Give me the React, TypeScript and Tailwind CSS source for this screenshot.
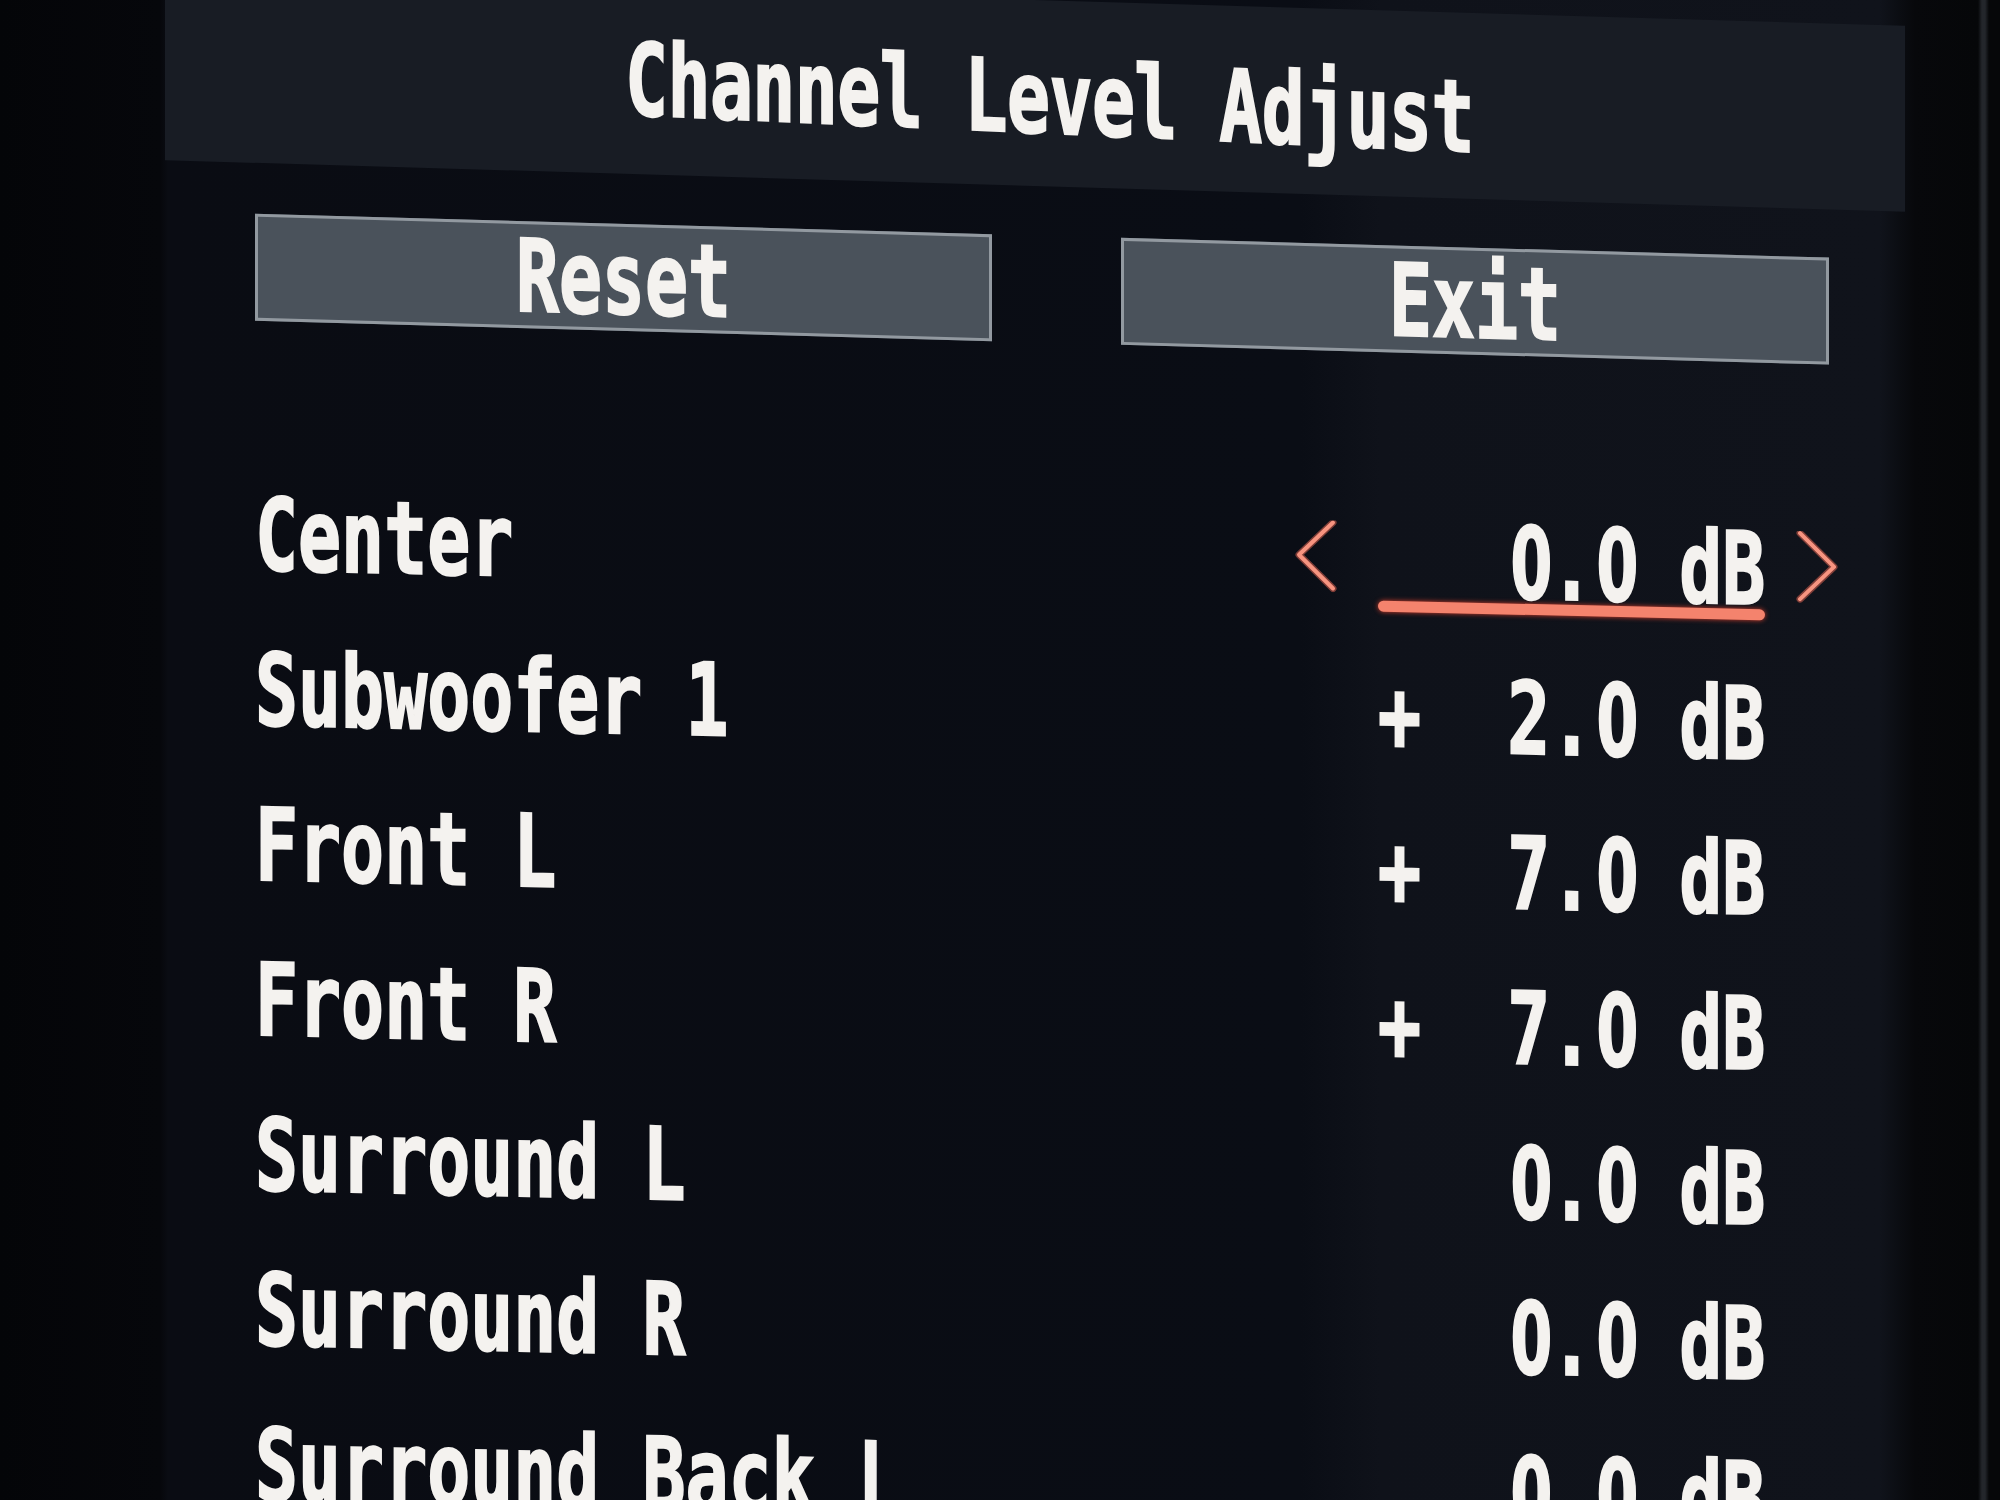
import React from "react";

const mono =
  "font-['DejaVu_Sans_Mono','Liberation_Mono',monospace] font-bold text-[71.5px] leading-[71px] scale-y-[1.4] text-[#f4f2ef] [-webkit-text-stroke:1.5px_#f4f2ef]";

const rows = [
  { name: "Center", value: "   0.0 dB", active: true },
  { name: "Subwoofer 1", value: "+  2.0 dB" },
  { name: "Front L", value: "+  7.0 dB" },
  { name: "Front R", value: "+  7.0 dB" },
  { name: "Surround L", value: "   0.0 dB" },
  { name: "Surround R", value: "   0.0 dB" },
  { name: "Surround Back L", value: "   0.0 dB" },
];

// the OSD font draws a plain zero, the mono one has a dot in it
function Value({ text }: { text: string }) {
  return (
    <>
      {text.split("").map((c, i) =>
        c === "0" ? (
          <span key={i} className="inline-block w-[43px] text-center font-['DejaVu_Sans',sans-serif] scale-x-[0.84]">
            0
          </span>
        ) : (
          <React.Fragment key={i}>{c}</React.Fragment>
        )
      )}
    </>
  );
}

function Chevron({ dir, show }: { dir: "left" | "right"; show?: boolean }) {
  const pts = dir === "left" ? "38,2 4,35 38,68" : "4,2 38,35 4,68";
  return (
    <svg viewBox="0 0 42 72" className={`w-[42px] h-[72px] -mt-[4px] shrink-0 ${show ? "" : "invisible"}`}>
      <polyline points={pts} fill="none" stroke="#f06a55" strokeWidth={7} strokeLinecap="round" strokeLinejoin="round" opacity={0.5} />
      <polyline points={pts} fill="none" stroke="#f79480" strokeWidth={4} strokeLinecap="round" strokeLinejoin="round" />
    </svg>
  );
}

export default function App() {
  return (
    <div className="w-[2000px] h-[1500px] overflow-hidden flex flex-col bg-[linear-gradient(90deg,#040508_0px,#06070b_160px,#0a0c13_168px,#0a0d15_1300px,#0f121a_1380px,#10131b_1880px,#07080b_1915px,#060709_1978px,#23262b_1982px,#23262b_1985px,#060709_1989px)]">
      {/* title band */}
      <div className="ml-[165px] w-[1740px] h-[186px] shrink-0 bg-[#181c24] skew-y-[1.7deg] flex items-center justify-center pt-[10px] pl-[28px]">
        <span className={`${mono} inline-block tracking-[-0.6px] skew-y-[0.6deg]`}>Channel Level Adjust</span>
      </div>

      {/* buttons */}
      <div className="mt-[52px] ml-[255px] flex gap-[129px] skew-y-[1.6deg] shrink-0">
        <div className="w-[737px] h-[107px] bg-[#4a525b] border-[3px] border-[#9299a0] flex items-center justify-center pt-[4px]">
          <span className={`${mono} inline-block`}>Reset</span>
        </div>
        <div className="w-[708px] h-[107px] bg-[#4a525b] border-[3px] border-[#9299a0] flex items-center justify-center pt-[4px]">
          <span className={`${mono} inline-block`}>Exit</span>
        </div>
      </div>

      {/* channel rows */}
      <div className="mt-[131px] ml-[255px] w-[1583px] flex flex-col skew-y-[1.3deg] shrink-0">
        {rows.map((r) => (
          <div key={r.name} className="h-[155px] shrink-0 flex items-start pt-[42px]">
            <span className={`${mono} whitespace-pre`}>{r.name}</span>
            <div className="ml-auto flex items-start">
              <Chevron dir="left" show={r.active} />
              <div className="ml-[41px] w-[387px] flex flex-col">
                <span className={`${mono} whitespace-pre text-right`}>
                  <Value text={r.value} />
                </span>
                <div
                  className={`mt-[4px] h-[11px] rounded-full ${
                    r.active ? "bg-[#f4836d] shadow-[0_0_5px_#d8402e]" : ""
                  }`}
                />
              </div>
              <div className="ml-[31px]">
                <Chevron dir="right" show={r.active} />
              </div>
            </div>
          </div>
        ))}
      </div>
    </div>
  );
}
